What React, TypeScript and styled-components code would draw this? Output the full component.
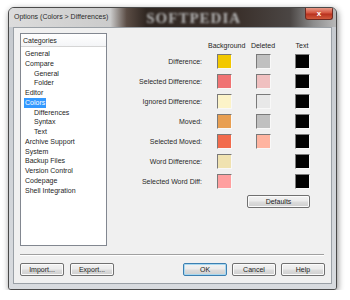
import styled, { createGlobalStyle, css } from 'styled-components';

const GlobalStyle = createGlobalStyle`
    html, body {
        margin: 0;
        padding: 0;
        background: #ffffff;
    }
    body {
        padding: 7px 0 0 8px;
        font-family: "Liberation Sans", "DejaVu Sans", sans-serif;
        font-size: 7px;
        color: #1e1e1e;
    }
`

const Window = styled.div`
    width: 329px;
    height: 283px;
    display: flex;
    flex-direction: column;
    border: 1px solid #4a4a4a;
    border-radius: 6px 6px 3px 3px;
    box-sizing: border-box;
    background: #cdd1d6;
    box-shadow: 1px 2px 6px rgba(0, 0, 0, 0.45);
    overflow: hidden;
`
const TitleBar = styled.div`
    height: 19px;
    display: flex;
    align-items: flex-start;
    flex-shrink: 0;
    background: linear-gradient(90deg,
        #dcdcdc 0%, #cbcbcb 31%, #5a4c44 36%, #2f2621 42%,
        #3a302b 70%, #4b4644 86%, #8c8c8c 93%, #b8b8b8 100%);
`
const Title = styled.div`
    margin: 5px 0 0 5px;
    font-size: 7px;
    color: #2b2b2b;
    white-space: nowrap;
`
const Watermark = styled.div`
    margin: 2px 0 0 38px;
    font-family: "Liberation Serif", serif;
    font-weight: bold;
    font-size: 15px;
    letter-spacing: 1px;
    color: #b4b4b4;
    filter: blur(1.2px);
    white-space: nowrap;
`
const CloseButton = styled.div`
    margin-left: auto;
    margin-right: 3px;
    width: 28px;
    height: 12px;
    border: 1px solid #6e2a22;
    border-top: none;
    border-radius: 0 0 3px 3px;
    box-sizing: border-box;
    background: linear-gradient(180deg, #e89a88 0%, #d4553f 45%, #b8321f 55%, #d05a3c 100%);
    color: #ffffff;
    font-weight: bold;
    font-size: 8px;
    display: flex;
    align-items: center;
    justify-content: center;
    line-height: 1;
`
const Frame = styled.div`
    flex: 1;
    display: flex;
    padding: 0 4px 5px 4px;
    background: linear-gradient(180deg, #c6cacf 0%, #d8dbdf 100%);
`
const Client = styled.div`
    flex: 1;
    display: flex;
    flex-direction: column;
    padding: 5px 6px 0 6px;
    background: #f0f0f0;
    border: 1px solid #9aa0a6;
    box-sizing: border-box;
`
const Main = styled.div`
    display: flex;
    height: 213px;
`
const CategoryList = styled.div`
    width: 87px;
    height: 213px;
    border: 1px solid #828790;
    box-sizing: border-box;
    background: #ffffff;
    display: flex;
    flex-direction: column;
`
const ListHeader = styled.div`
    height: 12px;
    padding-left: 2px;
    display: flex;
    align-items: center;
    background: linear-gradient(180deg, #ffffff 0%, #f4f5f7 100%);
    border-bottom: 1px solid #d5d5d5;
    color: #1e1e1e;
`
const ListBody = styled.div`
    padding-top: 2px;
    display: flex;
    flex-direction: column;
    align-items: flex-start;
`
const ListItem = styled.div<{ $indent?: boolean; $selected?: boolean }>`
    height: 9.75px;
    line-height: 9.75px;
    margin-left: ${p => p.$indent ? '12px' : '3px'};
    padding: 0 1px;
    white-space: nowrap;
    ${p => p.$selected && css`
        background: #3399ff;
        color: #ffffff;
    `}
`
const ColorPanel = styled.div`
    padding-top: 7px;
    display: grid;
    grid-template-columns: 101px 33px 44px 34px;
    grid-template-rows: 11px repeat(7, 20px) auto;
    align-items: center;
    align-content: start;
`
const ColumnHeader = styled.div`
    text-align: center;
    white-space: nowrap;
    color: #1e1e1e;
`
const RowLabel = styled.div`
    text-align: right;
    padding-right: 6px;
    white-space: nowrap;
    color: #2a2a2a;
`
const SwatchCell = styled.div`
    display: flex;
    justify-content: center;
`
const Swatch = styled.div<{ $color: string }>`
    width: 15px;
    height: 15px;
    box-sizing: border-box;
    background: ${p => p.$color};
    border: 1px solid #f8f8f8;
    border-top-color: #7a7a7a;
    border-left-color: #7a7a7a;
`
const Button = styled.div<{ $default?: boolean; $width?: number }>`
    width: ${p => p.$width ?? 44}px;
    height: 13px;
    box-sizing: border-box;
    border: 1px solid ${p => p.$default ? '#3c7fb1' : '#707070'};
    border-radius: 2px;
    background: linear-gradient(180deg, #f2f2f2 0%, #ebebeb 48%, #dddddd 52%, #cfcfcf 100%);
    box-shadow: inset 0 0 0 1px ${p => p.$default ? '#a8d8f0' : '#fbfbfb'};
    display: flex;
    align-items: center;
    justify-content: center;
    color: #1e1e1e;
    white-space: nowrap;
`
const DefaultsCell = styled.div`
    grid-column: 3 / 5;
    margin: 4px 0 0 6px;
`
const Separator = styled.div`
    margin-top: 8px;
    margin-right: 1px;
    height: 0;
    border-top: 1px solid #a0a0a0;
    border-bottom: 1px solid #ffffff;
`
const ButtonRow = styled.div`
    margin-top: 7px;
    display: flex;
    justify-content: space-between;
`
const ButtonGroup = styled.div<{ $gap: number }>`
    display: flex;
    gap: ${p => p.$gap}px;
`

const categories = [
    { name: 'General' },
    { name: 'Compare' },
    { name: 'General', indent: true },
    { name: 'Folder', indent: true },
    { name: 'Editor' },
    { name: 'Colors', selected: true },
    { name: 'Differences', indent: true },
    { name: 'Syntax', indent: true },
    { name: 'Text', indent: true },
    { name: 'Archive Support' },
    { name: 'System' },
    { name: 'Backup Files' },
    { name: 'Version Control' },
    { name: 'Codepage' },
    { name: 'Shell Integration' },
]

const colorRows: Array<{ label: string, bg: string, deleted?: string, text: string }> = [
    { label: 'Difference:', bg: '#f2c800', deleted: '#c0c0c0', text: '#000000' },
    { label: 'Selected Difference:', bg: '#f07373', deleted: '#f0c0c0', text: '#000000' },
    { label: 'Ignored Difference:', bg: '#fcf3c8', deleted: '#e8e8e8', text: '#000000' },
    { label: 'Moved:', bg: '#e89f52', deleted: '#c0c0c0', text: '#000000' },
    { label: 'Selected Moved:', bg: '#f26b4c', deleted: '#ffb4a0', text: '#000000' },
    { label: 'Word Difference:', bg: '#f0e2b0', text: '#000000' },
    { label: 'Selected Word Diff:', bg: '#ff9f9f', text: '#000000' },
]

export default function App() {
    return (
        <>
            <GlobalStyle />
            <Window>
                <TitleBar>
                    <Title>Options (Colors &gt; Differences)</Title>
                    <Watermark>SOFTPEDIA</Watermark>
                    <CloseButton>x</CloseButton>
                </TitleBar>
                <Frame>
                    <Client>
                        <Main>
                            <CategoryList>
                                <ListHeader>Categories</ListHeader>
                                <ListBody>
                                    {categories.map((item, index) => (
                                        <ListItem
                                            key={'cat-' + index}
                                            $indent={item.indent}
                                            $selected={item.selected}
                                        >
                                            {item.name}
                                        </ListItem>
                                    ))}
                                </ListBody>
                            </CategoryList>
                            <ColorPanel>
                                <div />
                                <ColumnHeader>Background</ColumnHeader>
                                <ColumnHeader>Deleted</ColumnHeader>
                                <ColumnHeader>Text</ColumnHeader>
                                {colorRows.map(row => [
                                    <RowLabel key={row.label + '-l'}>{row.label}</RowLabel>,
                                    <SwatchCell key={row.label + '-b'}><Swatch $color={row.bg} /></SwatchCell>,
                                    <SwatchCell key={row.label + '-d'}>
                                        {row.deleted && <Swatch $color={row.deleted} />}
                                    </SwatchCell>,
                                    <SwatchCell key={row.label + '-t'}><Swatch $color={row.text} /></SwatchCell>,
                                ])}
                                <DefaultsCell>
                                    <Button $width={63}>Defaults</Button>
                                </DefaultsCell>
                            </ColorPanel>
                        </Main>
                        <Separator />
                        <ButtonRow>
                            <ButtonGroup $gap={6}>
                                <Button>Import...</Button>
                                <Button>Export...</Button>
                            </ButtonGroup>
                            <ButtonGroup $gap={5}>
                                <Button $default>OK</Button>
                                <Button>Cancel</Button>
                                <Button>Help</Button>
                            </ButtonGroup>
                        </ButtonRow>
                    </Client>
                </Frame>
            </Window>
        </>
    )
}
